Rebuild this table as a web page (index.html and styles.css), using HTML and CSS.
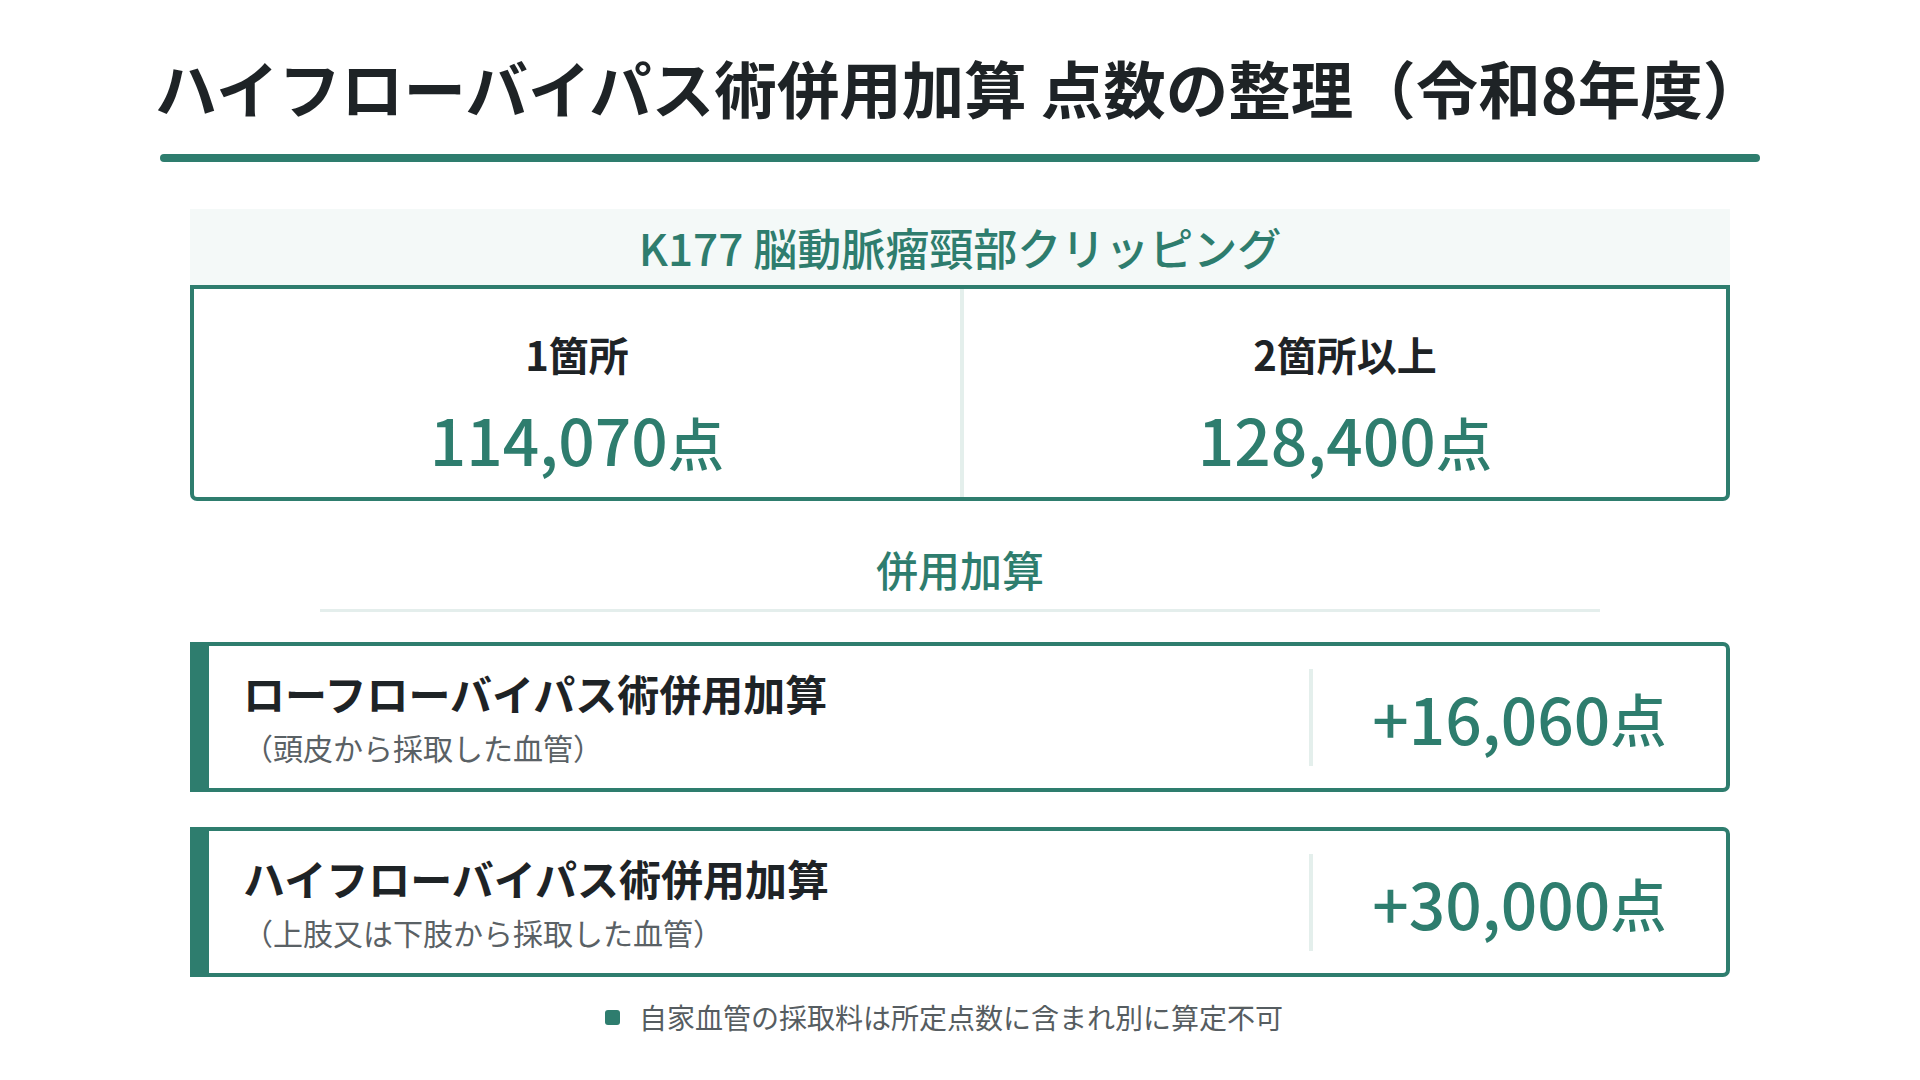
FILE: index.html
```html
<!DOCTYPE html>
<html lang="ja">
<head>
<meta charset="utf-8">
<title>ハイフローバイパス術併用加算 点数の整理（令和8年度）</title>
<link rel="stylesheet" href="styles.css">
</head>
<body>
<div class="page">
  <h1 class="title">ハイフローバイパス術併用加算 点数の整理（令和8年度）</h1>
  <div class="title-bar"></div>

  <section class="main-card">
    <div class="card-head">K177 脳動脈瘤頸部クリッピング</div>
    <div class="card-body">
      <div class="cell">
        <div class="cell-label">1箇所</div>
        <div class="cell-value">114,070<span class="unit">点</span></div>
      </div>
      <div class="cell cell-right">
        <div class="cell-label">2箇所以上</div>
        <div class="cell-value">128,400<span class="unit">点</span></div>
      </div>
    </div>
  </section>

  <h2 class="sub-head">併用加算</h2>
  <div class="sub-line"></div>

  <div class="addon">
    <div class="addon-text">
      <div class="addon-title">ローフローバイパス術併用加算</div>
      <div class="addon-sub">（頭皮から採取した血管）</div>
    </div>
    <div class="addon-points">+16,060<span class="unit">点</span></div>
  </div>

  <div class="addon">
    <div class="addon-text">
      <div class="addon-title">ハイフローバイパス術併用加算</div>
      <div class="addon-sub">（上肢又は下肢から採取した血管）</div>
    </div>
    <div class="addon-points">+30,000<span class="unit">点</span></div>
  </div>

  <p class="note"><span class="note-dot"></span>自家血管の採取料は所定点数に含まれ別に算定不可</p>
</div>
</body>
</html>
```

FILE: styles.css
```css
* {
  box-sizing: border-box;
}

html, body {
  margin: 0;
  padding: 0;
  background: #ffffff;
}

body {
  width: 1920px;
  height: 1080px;
  overflow: hidden;
  font-family: "Noto Sans CJK JP", "Noto Sans", sans-serif;
  color: #1e2326;
}

.page {
  display: flex;
  flex-direction: column;
  align-items: center;
  padding-top: 51px;
}

.title {
  margin: 0;
  font-size: 62.5px;
  line-height: 72px;
  font-weight: 700;
  color: #1e2326;
  text-align: center;
  white-space: nowrap;
}

.title-bar {
  width: 1600px;
  height: 8px;
  margin-top: 31px;
  border-radius: 4px;
  background: #2e7d6e;
}

.main-card {
  width: 1540px;
  margin-top: 47px;
}

.card-head {
  height: 76px;
  background: #f4f9f8;
  color: #2e7d6e;
  font-size: 44px;
  font-weight: 500;
  line-height: 76px;
  text-align: center;
}

.card-body {
  display: grid;
  grid-template-columns: 1fr 1fr;
  height: 216px;
  border: 4px solid #2e7d6e;
  border-radius: 0 0 7px 7px;
}

.cell {
  display: flex;
  flex-direction: column;
  align-items: center;
  padding-top: 41px;
}

.cell-right {
  border-left: 4px solid #e4efec;
}

.cell-label {
  font-size: 40px;
  line-height: 48px;
  font-weight: 700;
  color: #1e2326;
}

.cell-value {
  margin-top: 22px;
  font-size: 64px;
  line-height: 76px;
  font-weight: 500;
  color: #2e7d6e;
}

.unit {
  font-size: 0.88em;
}

.sub-head {
  margin: 42px 0 0;
  font-size: 42px;
  line-height: 52px;
  font-weight: 500;
  color: #2e7d6e;
}

.sub-line {
  width: 1280px;
  height: 3px;
  margin-top: 14px;
  background: #e4eeec;
}

.addon {
  display: flex;
  align-items: center;
  width: 1540px;
  height: 150px;
  margin-top: 30px;
  border: 4px solid #2e7d6e;
  border-left-width: 19px;
  border-radius: 0 7px 7px 0;
}

.addon + .addon {
  margin-top: 35px;
}

.addon-text {
  flex: 1;
  padding-left: 34px;
}

.addon-title {
  font-size: 42px;
  line-height: 52px;
  font-weight: 700;
  color: #1e2326;
}

.addon-sub {
  margin-top: 8px;
  font-size: 30px;
  line-height: 40px;
  font-weight: 400;
  color: #5a6165;
}

.addon-points {
  display: flex;
  align-items: center;
  justify-content: center;
  width: 417px;
  height: 97px;
  border-left: 4px solid #e4efec;
  font-size: 64px;
  font-weight: 500;
  color: #2e7d6e;
}

.note {
  display: flex;
  align-items: center;
  margin: 20px 0 0;
  padding-right: 32px;
  font-size: 28px;
  line-height: 40px;
  color: #565d61;
}

.note-dot {
  width: 15px;
  height: 15px;
  margin-right: 19px;
  border-radius: 3px;
  background: #2e7d6e;
}
```
